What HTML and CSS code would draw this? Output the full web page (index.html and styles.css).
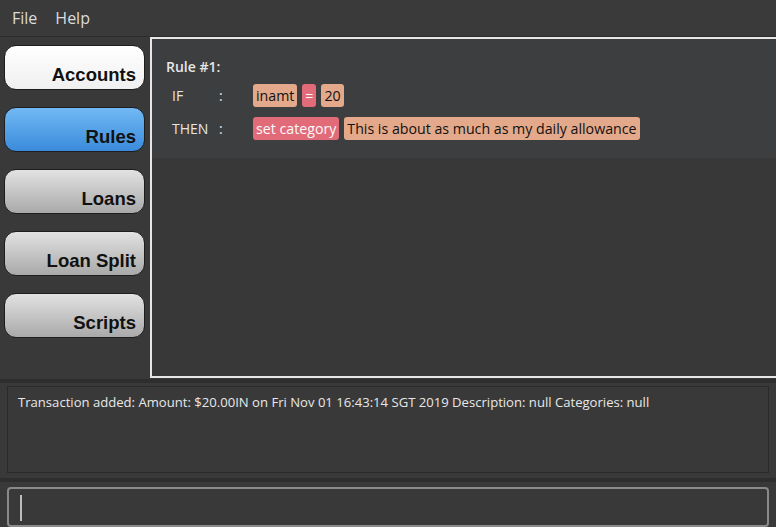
FILE: index.html
```html
<!DOCTYPE html>
<html>
<head>
<meta charset="utf-8">
<link rel="stylesheet" href="styles.css">
</head>
<body>
<div class="app">
  <div class="menubar">
    <span class="menu-item">File</span>
    <span class="menu-item">Help</span>
  </div>
  <div class="main">
    <nav class="nav">
      <div class="nav-btn btn-white">Accounts</div>
      <div class="nav-btn btn-blue">Rules</div>
      <div class="nav-btn btn-gray">Loans</div>
      <div class="nav-btn btn-gray">Loan Split</div>
      <div class="nav-btn btn-gray">Scripts</div>
    </nav>
    <section class="panel">
      <div class="rule-card">
        <div class="rule-title">Rule #1:</div>
        <div class="rule-row">
          <span class="rule-key">IF</span>
          <span class="rule-colon">:</span>
          <div class="badges">
            <span class="badge tan">inamt</span>
            <span class="badge pink">=</span>
            <span class="badge tan">20</span>
          </div>
        </div>
        <div class="rule-row">
          <span class="rule-key">THEN</span>
          <span class="rule-colon">:</span>
          <div class="badges">
            <span class="badge pink">set category</span>
            <span class="badge tan">This is about as much as my daily allowance</span>
          </div>
        </div>
      </div>
    </section>
  </div>
  <div class="divider"></div>
  <div class="result-wrap">
    <div class="result">Transaction added: Amount: $20.00IN on Fri Nov 01 16:43:14 SGT 2019 Description: null Categories: null</div>
  </div>
  <div class="divider"></div>
  <div class="command-wrap">
    <div class="command"><span class="caret"></span></div>
  </div>
</div>
</body>
</html>
```
FILE: styles.css
```css
html, body {
  margin: 0;
  padding: 0;
  background: #393939;
  overflow: hidden;
}
.app {
  width: 776px;
  height: 527px;
  display: flex;
  flex-direction: column;
  font-family: "Open Sans", "Noto Sans", sans-serif;
}
.menubar {
  height: 36px;
  display: flex;
  align-items: center;
  gap: 18px;
  padding-left: 12px;
  background: #3a3a3a;
  border-bottom: 1px solid #2c2c2c;
  color: #dcdcdc;
  font-size: 16px;
}
.main {
  height: 341px;
  display: flex;
}
.nav {
  width: 149px;
  flex: none;
  display: flex;
  flex-direction: column;
  gap: 17px;
  padding: 8px 0 0 4px;
  box-sizing: border-box;
}
.nav-btn {
  width: 141px;
  height: 45px;
  box-sizing: border-box;
  border: 1px solid #1e1e1e;
  border-radius: 12px;
  display: flex;
  align-items: flex-end;
  justify-content: flex-end;
  padding: 0 8px 3px 0;
  font-family: "Liberation Sans", Arial, sans-serif;
  font-weight: bold;
  font-size: 18.5px;
  color: #111;
}
.btn-white {
  background: linear-gradient(#ffffff, #f0f0f0);
}
.btn-blue {
  background: linear-gradient(#72b9f5, #3a8bdb);
}
.btn-gray {
  background: linear-gradient(#e2e2e2, #a9a9a9);
}
.panel {
  flex: 1;
  margin-left: 1px;
  border: 2px solid #e6e6e6;
  border-right: none;
  background: #383838;
}
.rule-card {
  height: 119px;
  box-sizing: border-box;
  background: #3d3e40;
  padding: 18px 0 0 14px;
  color: #e6e6e6;
  font-size: 14px;
}
.rule-title {
  font-weight: 600;
  height: 20px;
  line-height: 20px;
  margin-bottom: 7px;
}
.rule-row {
  display: flex;
  align-items: center;
  height: 23px;
  margin-bottom: 10px;
}
.rule-key {
  width: 47px;
  padding-left: 6px;
}
.rule-colon {
  width: 34px;
}
.badges {
  display: flex;
  gap: 5px;
}
.badge {
  height: 23px;
  line-height: 23px;
  padding: 0 3px;
  border-radius: 3px;
  font-size: 14.2px;
}
.tan {
  background: #e4a98a;
  color: #111;
}
.pink {
  background: #e26b7a;
  color: #fafafa;
}
.divider {
  height: 4px;
  background: #2e2e2e;
  margin-top: 1px;
}
.result-wrap {
  height: 94px;
  padding: 3px 7px 0 7px;
  box-sizing: border-box;
}
.result {
  height: 87px;
  box-sizing: border-box;
  border: 1px solid #2a2a2a;
  padding: 6px 10px;
  color: #e8e8e8;
  font-size: 13.1px;
}
.command-wrap {
  flex: 1;
  padding: 5px 7px 0 7px;
}
.command {
  height: 40px;
  box-sizing: border-box;
  border: 2px solid #8a8a8a;
  border-radius: 4px;
  padding: 6px 0 0 11px;
}
.caret {
  display: block;
  width: 2px;
  height: 26px;
  background: #bdbdbd;
}
```
